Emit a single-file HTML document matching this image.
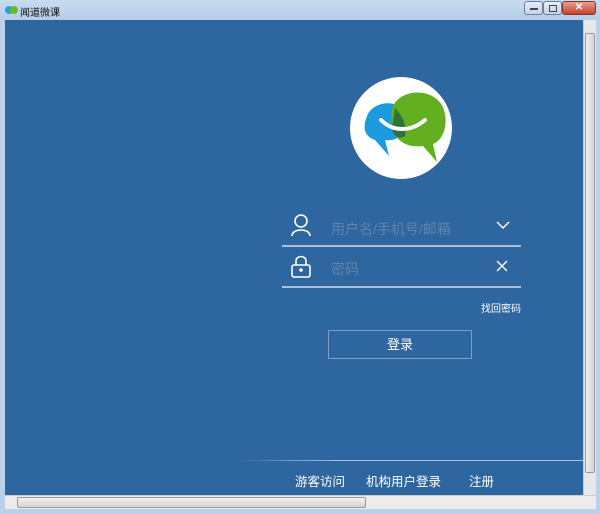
<!DOCTYPE html>
<html><head><meta charset="utf-8"><style>
*{margin:0;padding:0;box-sizing:border-box}
body{width:600px;height:514px;overflow:hidden;background:#b9d1ea;font-family:"Liberation Sans","Noto Sans CJK SC",sans-serif;position:relative}
.title{position:absolute;left:0;top:0;width:600px;height:20px;background:linear-gradient(#c9dcf0,#b5cde8)}
.ttext{position:absolute;left:20px;top:4px;font-size:10px;color:#111}
.content{position:absolute;left:5px;top:20px;width:578px;height:475px;background:#2e66a0;overflow:hidden}
.vs{position:absolute;left:583px;top:20px;width:13px;height:475px;background:#e8e8e8;border-left:1px solid #ccc}
.vthumb{position:absolute;left:1px;top:13px;width:10px;height:440px;background:linear-gradient(90deg,#eee,#d4d4d4);border:1px solid #999;border-radius:2px}
.hs{position:absolute;left:5px;top:495px;width:591px;height:14px;background:#ececec;border-top:1px solid #ccc}
.hthumb{position:absolute;left:12px;top:1px;width:349px;height:11px;background:linear-gradient(#f2f2f2,#d4d4d4);border:1px solid #999;border-radius:2px}
.btn{position:absolute;top:1px;height:14px;border:1px solid #6a7f98;border-radius:3px;background:linear-gradient(#e6eef8,#c3d3e6)}
.ph{position:absolute;color:#5e84ae;font-size:14px}
.line{position:absolute;left:277px;width:239px;height:2px;background:#a9c1dc}
.w{position:absolute;color:#fff}
</style></head><body>
<div class="title">
<svg style="position:absolute;left:5px;top:5px" width="13" height="10"><ellipse cx="4" cy="5" rx="4" ry="4" fill="#2aa0e0"/><ellipse cx="9" cy="5" rx="4" ry="4" fill="#6bbb20"/></svg>
<div class="ttext">闻道微课</div>
<div class="btn" style="left:524px;width:19px"><div style="margin:6px 5px;width:8px;height:2px;background:#445"></div></div>
<div class="btn" style="left:543px;width:19px"><div style="margin:3px 5px;width:8px;height:7px;border:1px solid #445"></div></div>
<div class="btn" style="left:562px;width:34px;background:linear-gradient(#e8a090,#c8402c);border-color:#7a3a30;color:#fff;font-size:10px;text-align:center;line-height:12px;font-weight:bold">✕</div>
</div>
<div class="content">
<svg style="position:absolute;left:344px;top:56px" width="104" height="104" viewBox="0 0 104 104">
<circle cx="52" cy="52" r="51" fill="#fff"/>
<path d="M18 40 C24 24 52 22 58 40 C62 56 48 66 36 64 L40 80 L26 64 C14 60 14 50 18 40Z" fill="#1b9ae0"/>
<path d="M44 30 C54 10 92 12 96 38 C99 56 90 66 84 68 L88 86 L74 70 C60 72 46 66 44 52 C42 42 42 36 44 30Z" fill="#62b020"/>
<path d="M46 32 C54 40 58 50 56 60 C50 64 44 60 43 52Z" fill="#1a5a40" opacity=".7"/>
<path d="M32 44 C44 56 62 56 76 44" stroke="#fff" stroke-width="4" fill="none" stroke-linecap="round"/>
</svg>
<svg class="w" style="left:285px;top:193px" width="22" height="24" fill="none" stroke="#fff" stroke-width="1.6"><circle cx="11" cy="8" r="6"/><path d="M2 23 C2 15 20 15 20 23"/></svg>
<div class="ph" style="left:326px;top:199px">用户名/手机号/邮箱</div>
<svg style="position:absolute;left:491px;top:201px" width="14" height="9" fill="none" stroke="#fff" stroke-width="1.4"><path d="M1 1 L7 7 L13 1"/></svg>
<div class="line" style="top:225px"></div>
<svg style="position:absolute;left:285px;top:234px" width="22" height="24" fill="none" stroke="#fff" stroke-width="1.6"><path d="M6 11 V7 C6 1 16 1 16 7 V11"/><rect x="2" y="11" width="18" height="12" rx="2"/><circle cx="11" cy="16" r="1" fill="#fff"/></svg>
<div class="ph" style="left:326px;top:239px">密码</div>
<svg style="position:absolute;left:491px;top:240px" width="12" height="12" stroke="#fff" stroke-width="1.4"><path d="M1 1 L11 11 M11 1 L1 11"/></svg>
<div class="line" style="top:266px"></div>
<div class="w" style="left:476px;top:280px;font-size:10px">找回密码</div>
<div style="position:absolute;left:323px;top:310px;width:144px;height:29px;border:1px solid #7d9fc5;color:#fff;font-size:13px;text-align:center;line-height:27px">登录</div>
<div style="position:absolute;left:230px;top:440px;width:348px;height:1px;background:linear-gradient(90deg,rgba(160,190,220,0),#a8c4e2 30%,#a8c4e2)"></div>
<div class="w" style="left:290px;top:451px;font-size:12.5px">游客访问</div>
<div class="w" style="left:361px;top:451px;font-size:12.5px">机构用户登录</div>
<div class="w" style="left:464px;top:451px;font-size:12.5px">注册</div>
</div>
<div class="vs"><div class="vthumb"></div></div>
<div class="hs"><div class="hthumb"></div></div>
</body></html>
